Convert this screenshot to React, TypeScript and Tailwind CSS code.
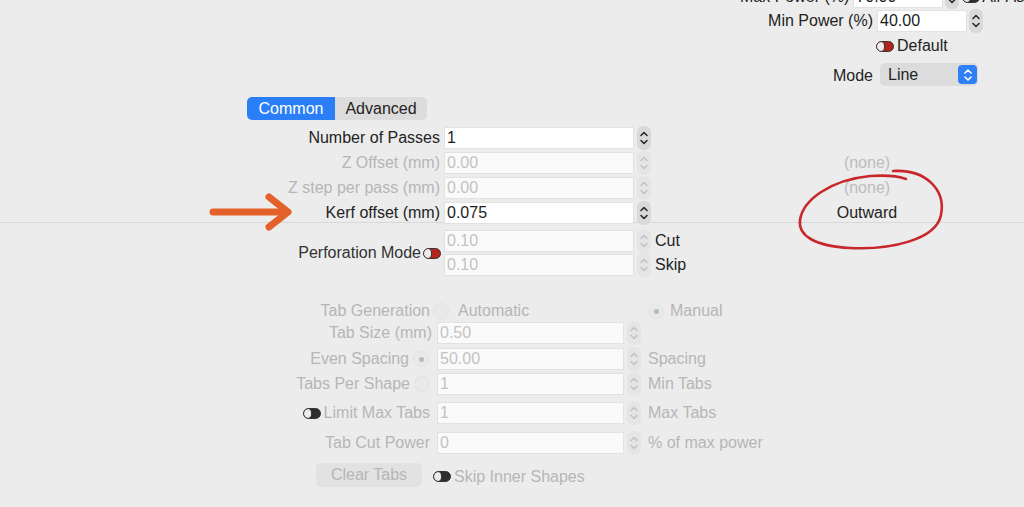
import React from "react"

const dim = "text-[#b6b6b6]"

function Stepper({ disabled = false }: { disabled?: boolean }) {
  const stroke = disabled ? "#c4c4c4" : "#2b2b2b"
  return (
    <svg width="14" height="24" viewBox="0 0 14 24" className="shrink-0">
      <rect x="0" y="0" width="14" height="24" rx="6" fill={disabled ? "#e5e5e5" : "#d9d9d9"} />
      <path d="M4 9.5 L7 6.5 L10 9.5" fill="none" stroke={stroke} strokeWidth="1.6" strokeLinecap="round" strokeLinejoin="round" />
      <path d="M4 14.5 L7 17.5 L10 14.5" fill="none" stroke={stroke} strokeWidth="1.6" strokeLinecap="round" strokeLinejoin="round" />
    </svg>
  )
}

function Field({ value, disabled = false, w = "w-[190px]" }: { value: string; disabled?: boolean; w?: string }) {
  return (
    <div
      className={`${w} h-[22px] shrink-0 flex items-center px-[2px] border border-[#e2e2e2] ${
        disabled ? "bg-[#fafafa] text-[#c3c3c3]" : "bg-white text-[#1c1c1c]"
      }`}
    >
      {value}
    </div>
  )
}

function Toggle({ fill }: { fill: string }) {
  return (
    <span className={`shrink-0 inline-flex w-[18px] h-[11px] rounded-full border-[1.5px] border-[#333] overflow-hidden ${fill}`}>
      <span className="w-[8px] h-full rounded-full bg-[#ececec] border-r-[1.5px] border-[#333]" />
    </span>
  )
}

function Radio({ checked = false }: { checked?: boolean }) {
  return (
    <span className="shrink-0 w-[16px] h-[16px] rounded-full bg-[#e9e9e9] border border-[#e3e3e3] flex items-center justify-center">
      {checked && <span className="w-[5px] h-[5px] rounded-full bg-[#b9b9b9]" />}
    </span>
  )
}

function TopRow({ label, value, disabled, note }: { label: string; value: string; disabled?: boolean; note?: string }) {
  return (
    <div className="h-[25px] flex items-center">
      <div className={`w-[440px] text-right ${disabled ? dim : ""}`}>{label}</div>
      <div className="ml-[4px]">
        <Field value={value} disabled={disabled} />
      </div>
      <div className="ml-[3px]">
        <Stepper disabled={disabled} />
      </div>
      {note && <div className={`ml-[180px] w-[72px] text-center ${note === "Outward" ? "" : "text-[#bdbdbd]"}`}>{note}</div>}
    </div>
  )
}

function TabRow({ left, value, note }: { left: React.ReactNode; value: string; note?: string }) {
  return (
    <div className="h-[22px] flex items-center">
      <div className={`w-[432px] flex items-center justify-end ${dim}`}>{left}</div>
      <div className="ml-[5px]">
        <Field value={value} disabled w="w-[187px]" />
      </div>
      <div className="ml-[3px]">
        <Stepper disabled />
      </div>
      {note && <div className={`ml-[7px] ${dim}`}>{note}</div>}
    </div>
  )
}

export default function App() {
  return (
    <div className="relative w-[1024px] h-[507px] overflow-hidden bg-[#ececec] font-['Liberation_Sans',Arial,sans-serif] text-[16px] text-[#232323] leading-none whitespace-nowrap">
      {/* power / mode block */}
      <div className="ml-[740px] -mt-[15px] flex flex-col">
        <div className="h-[24px] flex items-center">
          <div className="w-[133px] text-right">Max Power (%)</div>
          <div className="ml-[4px]">
            <Field value="70.00" w="w-[90px]" />
          </div>
          <div className="ml-[2px]">
            <Stepper />
          </div>
          <div className="ml-[3px] flex items-center gap-[2px]">
            <Toggle fill="bg-[#2d2d2d]" />
            Air Assist
          </div>
        </div>
        <div className="h-[24px] flex items-center">
          <div className="w-[133px] text-right">Min Power (%)</div>
          <div className="ml-[4px]">
            <Field value="40.00" w="w-[90px]" />
          </div>
          <div className="ml-[2px]">
            <Stepper />
          </div>
        </div>
        <div className="h-[26px] flex items-center pl-[136px] gap-[3px]">
          <Toggle fill="bg-[#b3241e]" />
          Default
        </div>
        <div className="mt-[4px] h-[23px] flex items-center">
          <div className="w-[133px] text-right pt-[3px]">Mode</div>
          <div className="ml-[7px] w-[98px] h-[23px] rounded-[5px] bg-[#dcdcdc] flex items-center justify-between pl-[8px] pr-[1px]">
            Line
            <span className="w-[19px] h-[19px] rounded-[4px] bg-[#2f80f5] flex items-center justify-center">
              <svg width="10" height="14" viewBox="0 0 10 14">
                <path d="M2 5 L5 2 L8 5" fill="none" stroke="#fff" strokeWidth="1.6" strokeLinecap="round" strokeLinejoin="round" />
                <path d="M2 9 L5 12 L8 9" fill="none" stroke="#fff" strokeWidth="1.6" strokeLinecap="round" strokeLinejoin="round" />
              </svg>
            </span>
          </div>
        </div>
      </div>

      {/* tabs */}
      <div className="mt-[11px] ml-[247px] flex h-[23px]">
        <div className="w-[88px] rounded-l-[5px] bg-[#2b7ff6] text-white flex items-center justify-center">Common</div>
        <div className="w-[92px] rounded-r-[5px] bg-[#dcdcdc] flex items-center justify-center">Advanced</div>
      </div>

      <div className="mt-[5px]">
        <TopRow label="Number of Passes" value="1" />
        <TopRow label="Z Offset (mm)" value="0.00" disabled note="(none)" />
        <TopRow label="Z step per pass (mm)" value="0.00" disabled note="(none)" />
        <TopRow label="Kerf offset (mm)" value="0.075" note="Outward" />
      </div>
      <div className="-mt-[3px] h-px bg-[#d8d8d8]" />

      {/* perforation */}
      <div className="mt-[6px] flex items-center">
        <div className="w-[421px] text-right text-[#333]">Perforation Mode</div>
        <div className="ml-[2px]">
          <Toggle fill="bg-[#b3241e]" />
        </div>
        <div className="ml-[3px] flex flex-col">
          <div className="h-[24px] flex items-center">
            <Field value="0.10" disabled />
            <div className="ml-[3px]">
              <Stepper disabled />
            </div>
            <div className="ml-[4px]">Cut</div>
          </div>
          <div className="h-[24px] flex items-center">
            <Field value="0.10" disabled />
            <div className="ml-[3px]">
              <Stepper disabled />
            </div>
            <div className="ml-[4px]">Skip</div>
          </div>
        </div>
      </div>

      {/* tabs generation */}
      <div className="mt-[23px] flex flex-col">
        <div className={`h-[22px] flex items-center ${dim}`}>
          <div className="w-[430px] text-right">Tab Generation</div>
          <div className="ml-[3px]">
            <Radio />
          </div>
          <div className="ml-[9px] w-[190px]">Automatic</div>
          <Radio checked />
          <div className="ml-[6px]">Manual</div>
        </div>
        <TabRow left="Tab Size (mm)" value="0.50" />
        <div className="mt-[4px]">
          <TabRow
            left={
              <>
                Even Spacing
                <span className="ml-[4px] mr-[3px]">
                  <Radio checked />
                </span>
              </>
            }
            value="50.00"
            note="Spacing"
          />
        </div>
        <div className="mt-[3px]">
          <TabRow
            left={
              <>
                Tabs Per Shape
                <span className="ml-[4px] mr-[2px]">
                  <Radio />
                </span>
              </>
            }
            value="1"
            note="Min Tabs"
          />
        </div>
        <div className="mt-[7px]">
          <TabRow
            left={
              <span className="flex items-center gap-[3px] pr-[2px]">
                <Toggle fill="bg-[#2d2d2d]" />
                Limit Max Tabs
              </span>
            }
            value="1"
            note="Max Tabs"
          />
        </div>
        <div className="mt-[8px]">
          <TabRow left={<span className="pr-[2px]">Tab Cut Power</span>} value="0" note="% of max power" />
        </div>
        <div className="mt-[9px] flex items-center">
          <div className={`ml-[316px] w-[106px] h-[24px] rounded-[5px] bg-[#e2e2e2] flex items-center justify-center ${dim}`}>
            Clear Tabs
          </div>
          <div className={`ml-[11px] pt-[3px] flex items-center gap-[3px] ${dim}`}>
            <Toggle fill="bg-[#2d2d2d]" />
            Skip Inner Shapes
          </div>
        </div>
      </div>

      {/* annotations */}
      <svg className="absolute left-0 top-0 pointer-events-none" width="1024" height="507" viewBox="0 0 1024 507">
        <path d="M213 212 L282 212" stroke="#e3622b" strokeWidth="7" strokeLinecap="round" fill="none" />
        <path d="M269 197 L288 212 L269 227" stroke="#e3622b" strokeWidth="7" strokeLinecap="round" strokeLinejoin="round" fill="none" />
        <path
          d="M893 171 C926 169 946 190 941 215 C936 240 890 250 850 248 C815 246 798 236 800 220 C803 200 830 180 870 176 C885 175 898 176 906 179"
          stroke="#c8282b"
          strokeWidth="2.6"
          strokeLinecap="round"
          fill="none"
        />
      </svg>
    </div>
  )
}
